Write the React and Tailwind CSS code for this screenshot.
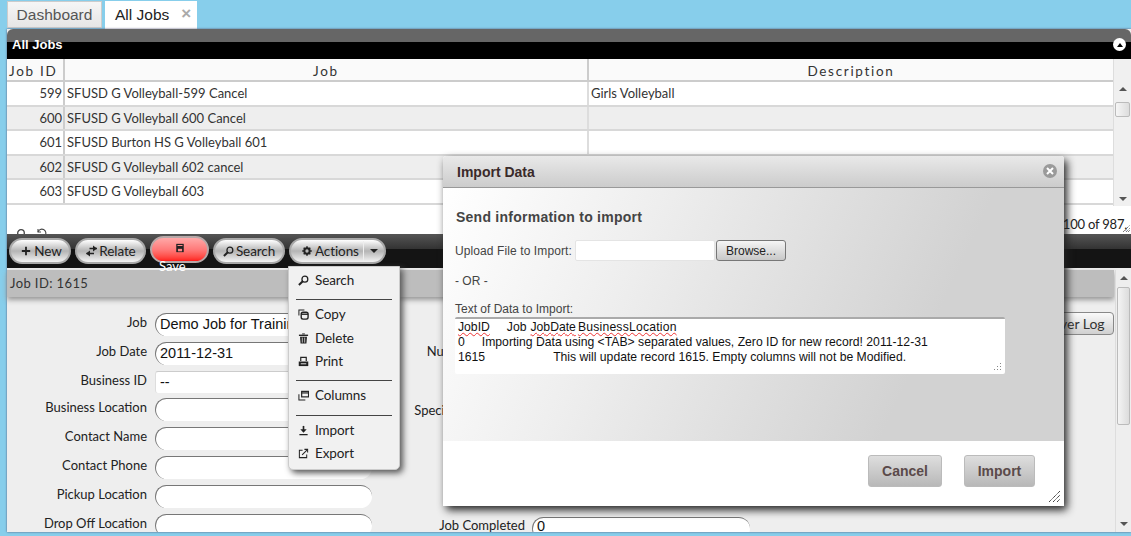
import React from "react";

const Ic = ({ children, className = "" }) => (
  <svg viewBox="0 0 12 12" className={"shrink-0 " + className} fill="none" stroke="currentColor" strokeWidth="1.3">{children}</svg>
);
const SearchI = ({ className }) => (<Ic className={className}><circle cx="7.5" cy="4.5" r="3.2" strokeWidth="1.4" /><path d="M5.2 6.8 1 11" strokeWidth="2.2" /></Ic>);
const PlusI = ({ className }) => (<Ic className={className}><path d="M6 1v10M1 6h10" strokeWidth="2.2" /></Ic>);
const RelateI = ({ className }) => (<Ic className={className}><path d="M4 3.5h7.5M1 8.5h7.5" strokeWidth="1.6" /><path d="M7.5 .5v6L11.5 3.5zM4.5 5.5v6L.5 8.5z" fill="currentColor" stroke="none" /></Ic>);
const SaveI = ({ className }) => (<Ic className={className}><path d="M1.5 1h9v10h-9z" fill="currentColor" stroke="none" /><path d="M3 3h6" stroke="#f88" strokeWidth="1.2" /><path d="M3.5 7h5v3h-5z" fill="#f88" stroke="none" /></Ic>);
const GearI = ({ className }) => (<Ic className={className}><circle cx="6" cy="6" r="3.2" strokeWidth="2.4" /><path d="M6 .3v2M6 9.7v2M.3 6h2M9.7 6h2M2 2l1.4 1.4M8.6 8.6 10 10M2 10l1.4-1.4M8.6 3.4 10 2" strokeWidth="1.8" /></Ic>);
const CopyI = ({ className }) => (<Ic className={className}><path d="M1 7V1h6" strokeWidth="1.1" /><rect x="3.5" y="3.5" width="7.5" height="7.5" rx="2" strokeWidth="1.5" /><path d="M3.5 5.7h7.5" strokeWidth="1.5" /></Ic>);
const TrashI = ({ className }) => (<Ic className={className}><path d="M1 2.5h10" strokeWidth="1.5" /><path d="M4.5 1h3" strokeWidth="1" /><path d="M2.2 4h7.6l-.6 7.5H2.8z" fill="currentColor" stroke="none" /><path d="M4.7 5v5.5M7.3 5v5.5" stroke="#f1f1f1" strokeWidth=".8" /></Ic>);
const PrintI = ({ className }) => (<Ic className={className}><path d="M3 5.5V1.5h6v4" strokeWidth="1.3" /><path d="M.8 6h10.4v5H.8z" fill="currentColor" stroke="none" /><path d="M3 8.5h6" stroke="#f1f1f1" strokeWidth="1" /></Ic>);
const ColumnsI = ({ className }) => (<Ic className={className}><path d="M1 4.5v6.5h7" strokeWidth="1.1" /><rect x="4" y="1.5" width="7.5" height="6" strokeWidth="1.3" /><path d="M4 3.2h7.5" strokeWidth="1.3" /></Ic>);
const ImportI = ({ className }) => (<Ic className={className}><path d="M6 1v5" strokeWidth="1.8" /><path d="M2.5 4.5h7L6 8.5z" fill="currentColor" stroke="none" /><path d="M1.5 10.5h9" strokeWidth="1.4" /></Ic>);
const ExportI = ({ className }) => (<Ic className={className}><path d="M5 2.5H1.5v8h8V7" strokeWidth="1.1" /><path d="M4.5 7.5 10 2" strokeWidth="1.1" /><path d="M7 1.5h3.5V5" strokeWidth="1.1" /></Ic>);

const rows = [
  ["599", "SFUSD G Volleyball-599 Cancel", "Girls Volleyball", "h-[25px] bg-white"],
  ["600", "SFUSD G Volleyball 600 Cancel", "", "h-[24px] bg-[#eeeeee]"],
  ["601", "SFUSD Burton HS G Volleyball 601", "", "h-[25px] bg-white"],
  ["602", "SFUSD G Volleyball 602 cancel", "", "h-[24px] bg-[#eeeeee]"],
  ["603", "SFUSD G Volleyball 603", "", "h-[25px] bg-white"],
];

const Pill = ({ children, className = "" }) => (
  <button className={"h-[26px] mt-[4px] rounded-full border-2 border-[#a9a9a9] bg-gradient-to-b from-[#ffffff] via-[#b4b4b4] to-[#f4f4f4] flex items-center justify-center text-[13.5px] tracking-[-0.1px] text-[#222] " + className}>{children}</button>
);

const MenuItem = ({ icon: I, label, className = "" }) => (
  <div className={"flex items-center h-[24px] pl-[9px] text-[13.5px] tracking-[-0.1px] text-[#222] " + className}>
    <I className="w-[11px] h-[11px] text-[#222] mr-[6px]" />
    <span>{label}</span>
  </div>
);

const ScrollUp = () => <div className="w-0 h-0 border-l-[4px] border-r-[4px] border-b-[4px] border-l-transparent border-r-transparent border-b-[#555]" />;
const ScrollDown = () => <div className="w-0 h-0 border-l-[4px] border-r-[4px] border-t-[4px] border-l-transparent border-r-transparent border-t-[#555]" />;

const leftRows = [
  ["Job", "Demo Job for Training", "h-[29px]", "rounded-full h-[23px]"],
  ["Job Date", "2011-12-31", "h-[29px]", "rounded-full h-[23px]"],
  ["Business ID", "--", "h-[27px]", "rounded-[3px] h-[22px] border-t-[#ccc] border-l-[#ddd]"],
  ["Business Location", "", "h-[29px]", "rounded-full h-[23px]"],
  ["Contact Name", "", "h-[29px]", "rounded-full h-[23px]"],
  ["Contact Phone", "", "h-[29px]", "rounded-full h-[23px]"],
  ["Pickup Location", "", "h-[29px]", "rounded-full h-[23px]"],
  ["Drop Off Location", "", "h-[29px]", "rounded-full h-[23px]"],
];

export default function App() {
  const lato = { fontFamily: "Lato, 'Noto Sans', sans-serif" };
  const arial = { fontFamily: "'Liberation Sans', sans-serif" };
  return (
    <div className="relative w-[1131px] h-[536px] overflow-hidden bg-[#87ceeb] flex flex-col" style={lato}>
      {/* Tabs */}
      <div className="h-[29px] shrink-0 pl-[7px] pt-[1px] flex items-stretch">
        <div className="w-[95px] h-[27px] border border-[#ccc] bg-gradient-to-b from-[#f6f6f6] to-[#e6e6e6] text-[15.5px] text-[#555] flex items-center justify-center" style={arial}>Dashboard</div>
        <div className="ml-[3px] w-[92px] h-[28px] bg-white text-[15.5px] text-[#222] flex items-center pl-[10px]" style={arial}>
          All Jobs
          <span className="ml-[12px] mb-[3px] text-[17px] leading-[17px] font-bold text-[#aaa]">×</span>
        </div>
      </div>

      {/* Panel */}
      <div className="ml-[7px] h-[503px] bg-[#eeeeee] flex flex-col shadow-[0_0_2px_#557]">
        {/* Title */}
        <div className="h-[30px] shrink-0 rounded-t-[6px] bg-[linear-gradient(#666666_0,#666666_43%,#000000_43%,#000000_100%)] flex items-end pb-[7px] pl-[5px] pr-[5px] justify-between">
          <span className="text-[13px] leading-[15px] font-bold text-white" style={arial}>All Jobs</span>
          <span className="w-[13px] h-[13px] mb-[1px] rounded-full bg-white flex items-center justify-center"><span className="w-0 h-0 border-l-[3px] border-r-[3px] border-b-[4px] border-l-transparent border-r-transparent border-b-black" /></span>
        </div>

        {/* Grid */}
        <div className="h-[147px] shrink-0 flex bg-white">
          <div className="flex-1 min-w-0">
            <div className="h-[23px] flex bg-[#fafafa] border-b-2 border-[#ccc] text-[13.5px] tracking-[1.7px] text-[#333]">
              <div className="w-[58px] border-r-2 border-[#ccc] pl-[2px] leading-[24px]">Job ID</div>
              <div className="w-[524px] border-r-2 border-[#ccc] text-center leading-[24px]">Job</div>
              <div className="flex-1 text-center leading-[24px]">Description</div>
            </div>
            {rows.map((r) => (
              <div key={r[0]} className={"flex border-b-2 border-[#d8d8d8] text-[13px] text-[#333] " + r[3]}>
                <div className="w-[58px] h-full border-r-2 border-[#ccc] pr-[1px] text-right leading-[23px]">{r[0]}</div>
                <div className="w-[524px] h-full border-r-2 border-[#ddd] pl-[2px] leading-[23px]">{r[1]}</div>
                <div className="flex-1 pl-[2px] leading-[23px]">{r[2]}</div>
              </div>
            ))}
          </div>
          <div className="w-[18px] shrink-0 bg-[#f0f0f0] border-l border-[#ddd] flex flex-col items-center pt-[28px] pb-[5px]">
            <ScrollUp />
            <div className="mt-[11px] w-[15px] h-[15px] rounded-[2px] border border-[#bbb] bg-gradient-to-r from-[#f6f6f6] to-[#dcdcdc]" />
            <div className="flex-1" />
            <ScrollDown />
          </div>
        </div>

        {/* Pager */}
        <div className="relative h-[28px] shrink-0 bg-white flex items-end justify-between overflow-hidden text-[14px] text-[#222]">
          <div className="flex items-start h-[6px] pl-[10px] gap-[11px] overflow-hidden text-[#444]">
            <svg width="8" height="10" viewBox="0 0 8 10" fill="none" stroke="currentColor" strokeWidth="1.3"><circle cx="4" cy="5" r="3.3" /></svg>
            <svg width="11" height="10" viewBox="0 0 11 10" fill="none" stroke="currentColor" strokeWidth="1.1"><path d="M2 4a4 4 0 1 1 1 4" /><path d="M2 1v3h3" /></svg>
          </div>
          <span className="pr-[4px] pb-[1px] leading-[18px] text-[13px] tracking-[-0.2px]">100 of 987,</span>
          <svg className="absolute right-[1px] bottom-[2px]" width="7" height="7" viewBox="0 0 7 7" stroke="#444" strokeWidth="1" strokeDasharray="1 1"><path d="M0 7 7 0M3 7l4-4M5 7l2-2" /></svg>
        </div>

        {/* Toolbar */}
        <div className="h-[34px] shrink-0 bg-[linear-gradient(#555555_0,#333333_44%,#141414_44%,#141414_100%)] flex pl-[1px] gap-[4px]">
          <Pill className="ml-[1px] w-[62px] pl-[3px]"><PlusI className="w-[10px] h-[10px] mr-[3px]" />New</Pill>
          <Pill className="w-[71px]"><RelateI className="w-[13px] h-[12px] mr-[1px]" />Relate</Pill>
          <div className="relative w-[59px] h-[27px] mt-[2px] rounded-full border-2 border-[#b8a8a8] bg-gradient-to-b from-[#ffa8a8] via-[#ff7a7a] to-[#ff1818] flex justify-center pt-[5px]">
            <SaveI className="w-[10px] h-[10px] text-[#222]" />
            <span className="absolute left-[7px] top-[20px] text-[13px] leading-[16px] text-white">Save</span>
          </div>
          <Pill className="w-[72px]"><SearchI className="w-[11px] h-[11px] mr-[2px]" />Search</Pill>
          <Pill className="w-[97px] justify-start pl-[11px]">
            <GearI className="w-[10px] h-[10px] mr-[3px]" />Actions
            <span className="ml-[4px] h-[20px] border-l border-[#eee] pl-[6px] flex items-center"><span className="w-0 h-0 border-l-[4px] border-r-[4px] border-t-[4px] border-l-transparent border-r-transparent border-t-[#222]" /></span>
          </Pill>
        </div>

        {/* Detail */}
        <div className="flex-1 min-h-0 flex pt-[2px] bg-[#eeeeee]">
          <div className="flex-1 min-w-0 flex flex-col">
            <div className="h-[27px] shrink-0 bg-[#bdbdbd] shadow-[0_3px_5px_#999] pl-[3px] text-[13px] leading-[27px] text-[#333] tracking-[0.4px]">Job ID: 1615</div>
            <div className="flex-1 min-h-0 overflow-hidden flex pt-[16px]">
              {/* Left form column */}
              <div className="w-[365px] shrink-0 flex flex-col">
                {leftRows.map(([label, value, h, inputCls]) => (
                  <div key={label} className={"flex shrink-0 " + h}>
                    <label className="w-[140px] shrink-0 text-right text-[13px] leading-[18px] text-[#222]">{label}</label>
                    <div className={"ml-[8px] w-[217px] shrink-0 border border-[#777] border-r-0 border-b-0 bg-white pl-[4px] text-[14.5px] leading-[21px] text-[#111] " + inputCls} style={arial}>{value}</div>
                  </div>
                ))}
              </div>
              {/* Right form column */}
              <div className="ml-[66px] w-[320px] shrink-0 flex flex-col">
                <div className="h-[29px] shrink-0 w-[87px] flex justify-end text-[13px] leading-[18px] text-[#222] whitespace-nowrap">Invoice Status</div>
                <div className="h-[58px] shrink-0 w-[87px] flex justify-end text-[13px] leading-[18px] text-[#222] whitespace-nowrap">Number of Buses</div>
                <div className="h-[117px] shrink-0 w-[87px] flex justify-end text-[13px] leading-[18px] pt-[1px] text-[#222] whitespace-nowrap">Special Instructions</div>
                <div className="flex h-[29px] shrink-0">
                  <label className="w-[87px] text-right text-[13px] leading-[18px] -mt-[1px] text-[#222] whitespace-nowrap">Job Completed</label>
                  <div className="ml-[7px] w-[218px] h-[23px] rounded-full border border-[#777] border-r-0 border-b-0 bg-white pl-[4px] text-[14.5px] leading-[17px] text-[#111]" style={arial}>0</div>
                </div>
              </div>
              <div className="flex-1" />
              <button className="mt-[-1px] w-[74px] h-[23px] rounded-[4px] border border-[#888] bg-gradient-to-b from-[#fafafa] to-[#d0d0d0] text-[14px] text-right pr-[10px] whitespace-nowrap text-[#333] shrink-0">Driver Log</button>
            </div>
          </div>
          <div className="w-[16px] ml-[1px] shrink-0 bg-[#eeeeee] border-l border-[#ddd] flex flex-col items-center pt-[6px] pb-[6px]">
            <ScrollUp />
            <div className="mt-[7px] w-[13px] h-[138px] rounded-[2px] border border-[#bbb] bg-gradient-to-r from-[#f4f4f4] to-[#dcdcdc]" />
            <div className="flex-1" />
            <ScrollDown />
          </div>
        </div>
      </div>

      {/* Actions menu */}
      <div className="absolute left-[288px] top-[266px] w-[112px] h-[204px] bg-[#f1f1f1] rounded-b-[5px] border border-[#ccc] shadow-[3px_3px_6px_#555] pt-[1px]">
        <MenuItem icon={SearchI} label="Search" />
        <div className="mx-[7px] mt-[7px] mb-[2px] border-t border-[#444]" />
        <MenuItem icon={CopyI} label="Copy" />
        <MenuItem icon={TrashI} label="Delete" />
        <MenuItem icon={PrintI} label="Print" className="-mt-[1px]" />
        <div className="mx-[7px] mt-[7px] mb-[2px] border-t border-[#444]" />
        <MenuItem icon={ColumnsI} label="Columns" />
        <div className="mx-[7px] mt-[8px] mb-[2px] border-t border-[#444]" />
        <MenuItem icon={ImportI} label="Import" />
        <MenuItem icon={ExportI} label="Export" className="-mt-[1px]" />
      </div>

      {/* Modal */}
      <div className="absolute left-[443px] top-[156px] w-[621px] h-[350px] flex flex-col bg-white rounded-[3px] shadow-[3px_4px_9px_#222]" style={arial}>
        <div className="h-[32px] shrink-0 rounded-t-[3px] border-b border-[#999] bg-gradient-to-b from-[#e9e9e9] to-[#cccccc] flex items-center justify-between pt-[1px] pl-[14px] pr-[7px]">
          <span className="text-[14px] font-bold text-[#3a2a2a]">Import Data</span>
          <span className="-mt-[2px] w-[14px] h-[14px] rounded-full bg-[#9a9a9a] flex items-center justify-center text-white">
            <svg width="8" height="8" viewBox="0 0 8 8" stroke="currentColor" strokeWidth="2"><path d="M1 1l6 6M7 1 1 7" /></svg>
          </span>
        </div>
        <div className="h-[253px] shrink-0 bg-[linear-gradient(115deg,#ffffff_0%,#eeeeee_30%,#d2d2d2_75%,#d2d2d2_100%)] pl-[12px] flex flex-col">
          <div className="mt-[21px] pl-[1px] text-[14px] leading-[16px] font-bold tracking-[0.25px] text-[#444]">Send information to import</div>
          <div className="mt-[15px] flex items-center h-[21px] text-[12px] text-[#444]">
            <span className="w-[120px] shrink-0 whitespace-nowrap tracking-[0.1px]">Upload File to Import:</span>
            <div className="w-[140px] h-[21px] bg-white rounded-[2px] border border-[#e4e4e4]" />
            <button className="ml-[1px] w-[70px] h-[21px] rounded-[3px] border border-[#777] bg-gradient-to-b from-[#f5f5f5] to-[#c8c8c8] text-[12px] text-[#222]">Browse...</button>
          </div>
          <div className="mt-[13px] text-[12px] leading-[14px] text-[#444]">- OR -</div>
          <div className="mt-[14px] text-[12px] leading-[14px] text-[#444]">Text of Data to Import:</div>
          <div className="relative mt-[1px] w-[550px] h-[57px] bg-white border-t-2 border-[#aaa] rounded-[2px] pl-[3px] pt-[1px] text-[12.2px] leading-[15px] text-[#111] whitespace-pre">
            <div><span className="underline decoration-wavy decoration-[#e33] decoration-1">JobID</span><span className="ml-[17px]">Job</span><span className="ml-[4px] underline decoration-wavy decoration-[#e33] decoration-1">JobDate</span><span className="ml-[2px] underline decoration-wavy decoration-[#e33] decoration-1 tracking-[0.2px]">BusinessLocation</span></div>
            <div><span>0</span><span className="ml-[17px]">Importing Data using &lt;TAB&gt; separated values, Zero ID for new record! 2011-12-31</span></div>
            <div><span>1615</span><span className="ml-[68px]">This will update record 1615. Empty columns will not be Modified.</span></div>
            <svg className="absolute right-[3px] bottom-[3px]" width="9" height="8" viewBox="0 0 9 8" fill="#888"><rect x="7" y="0" width="1" height="1" /><rect x="4" y="3" width="1" height="1" /><rect x="7" y="3" width="1" height="1" /><rect x="1" y="6" width="1" height="1" /><rect x="4" y="6" width="1" height="1" /><rect x="7" y="6" width="1" height="1" /></svg>
          </div>
        </div>
        <div className="relative flex-1 bg-white flex items-start justify-end gap-[22px] pt-[14px] pr-[29px]">
          <button className="w-[74px] h-[32px] rounded-[3px] border border-[#bbb] bg-gradient-to-b from-[#dedede] to-[#b8b8b8] text-[14px] font-bold text-[#5a4a4a]">Cancel</button>
          <button className="w-[71px] h-[32px] rounded-[3px] border border-[#bbb] bg-gradient-to-b from-[#dedede] to-[#b8b8b8] text-[14px] font-bold text-[#5a4a4a]">Import</button>
          <svg className="absolute right-[4px] bottom-[4px]" width="11" height="11" viewBox="0 0 11 11" stroke="#222" strokeWidth="1" strokeDasharray="1.2 .6"><path d="M0 11 11 0M4 11l7-7M8 11l3-3" /></svg>
        </div>
      </div>
    </div>
  );
}
